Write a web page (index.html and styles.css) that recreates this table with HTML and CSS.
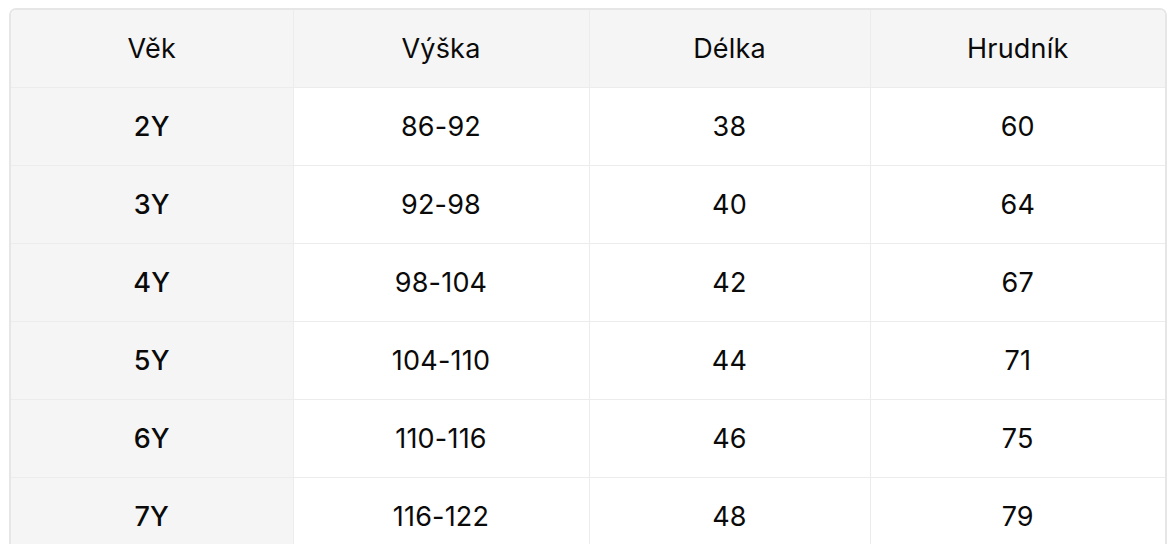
FILE: index.html
```html
<!DOCTYPE html>
<html lang="cs">
<head>
<meta charset="utf-8">
<title>Tabulka velikostí</title>
<link rel="stylesheet" href="styles.css">
</head>
<body>
<div class="table-wrap">
  <table class="size-table">
    <colgroup>
      <col class="c1"><col class="c2"><col class="c3"><col class="c4">
    </colgroup>
    <thead>
      <tr><th>Věk</th><th>Výška</th><th>Délka</th><th>Hrudník</th></tr>
    </thead>
    <tbody>
      <tr><td class="age">2Y</td><td>86-92</td><td>38</td><td>60</td></tr>
      <tr><td class="age">3Y</td><td>92-98</td><td>40</td><td>64</td></tr>
      <tr><td class="age">4Y</td><td>98-104</td><td>42</td><td>67</td></tr>
      <tr><td class="age">5Y</td><td>104-110</td><td>44</td><td>71</td></tr>
      <tr><td class="age">6Y</td><td>110-116</td><td>46</td><td>75</td></tr>
      <tr><td class="age">7Y</td><td>116-122</td><td>48</td><td>79</td></tr>
    </tbody>
  </table>
</div>
</body>
</html>
```
FILE: styles.css
```css
html, body {
  margin: 0;
  padding: 0;
  background: #ffffff;
}
body {
  font-family: Inter, "Liberation Sans", sans-serif;
  color: #0a0a0a;
}
.table-wrap {
  margin: 8px 9px 0 9px;
  border: 2px solid #e6e6e6;
  border-radius: 7px;
  overflow: hidden;
}
.size-table {
  width: 100%;
  border-collapse: collapse;
  table-layout: fixed;
}
.c1 { width: 282px; }
.c2 { width: 296px; }
.c3 { width: 281px; }
.size-table th,
.size-table td {
  height: 77px;
  padding: 0;
  text-align: center;
  vertical-align: middle;
  font-size: 27px;
  letter-spacing: 0.2px;
  border: 1px solid #ececec;
}
.size-table tr > :first-child { border-left: none; }
.size-table tr > :last-child { border-right: none; }
.size-table thead th {
  border-top: none;
  font-weight: 400;
  background: #f5f5f5;
}
.size-table td.age {
  background: #f5f5f5;
  font-weight: 500;
}
```
